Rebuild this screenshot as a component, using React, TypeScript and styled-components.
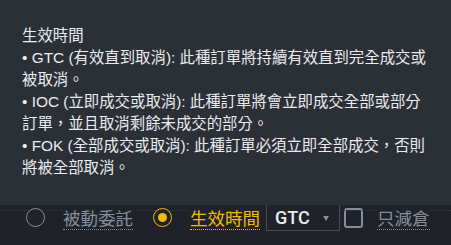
import { useState } from 'react';
import styled, { createGlobalStyle } from 'styled-components';

const GlobalStyle = createGlobalStyle`
  html, body {
    margin: 0;
    padding: 0;
    background: #1f2228;
  }
  body {
    font-family: Roboto, "Noto Sans CJK TC", sans-serif;
  }
`;

const Page = styled.div`
  position: relative;
  width: 451px;
  height: 245px;
  padding-top: 204px;
  box-sizing: border-box;
  background: #1f2228;
  overflow: hidden;
`;

const Tooltip = styled.div`
  position: absolute;
  top: 0;
  left: 0;
  right: 0;
  height: 205px;
  box-sizing: border-box;
  padding: 25px 22px 0 22px;
  background: #2b2f36;
  color: #eaecef;
  font-family: "Liberation Sans", "Noto Sans CJK TC", sans-serif;
  font-size: 15.4px;
  line-height: 22px;
  z-index: 2;
`;

const TipLine = styled.div``;

const Row = styled.div`
  position: relative;
  display: flex;
  align-items: center;
  height: 27px;
  padding-left: 26px;

  &:before {
    content: '';
    position: absolute;
    top: 6px;
    left: 0;
    right: 0;
    border-top: 1px dotted #353a42;
  }
`;

const Radio = styled.span<{ $checked: boolean }>`
  position: relative;
  width: 19px;
  height: 19px;
  box-sizing: border-box;
  border-radius: 50%;
  border: 1.5px solid ${(p) => (p.$checked ? '#f0b90b' : '#848e9c')};
  background: #1f2228;
  margin-right: 18px;
  flex-shrink: 0;

  &:after {
    content: '';
    display: ${(p) => (p.$checked ? 'block' : 'none')};
    position: absolute;
    top: 3.5px;
    left: 3.5px;
    width: 9px;
    height: 9px;
    border-radius: 50%;
    background: #f0b90b;
  }
`;

const Label = styled.span<{ $active?: boolean }>`
  position: relative;
  font-family: "Noto Sans CJK TC", sans-serif;
  font-size: 17.5px;
  line-height: 20px;
  padding-bottom: 1px;
  margin-top: 3px;
  color: ${(p) => (p.$active ? '#f0b90b' : '#848e9c')};
  border-bottom: 1px dotted ${(p) => (p.$active ? '#f0b90b' : '#848e9c')};
  margin-right: 20px;
  background: #1f2228;
  cursor: pointer;
`;

const Select = styled.div`
  position: relative;
  display: flex;
  align-items: center;
  width: 74px;
  height: 27px;
  box-sizing: border-box;
  border: 1px solid #474d57;
  padding-left: 8px;
  margin-left: -14px;
  margin-right: 4px;
  background: #1f2228;
  color: #eaecef;
  font-size: 18px;
  font-weight: 500;
`;

const Caret = styled.span`
  position: absolute;
  right: 10px;
  top: 11px;
  width: 0;
  height: 0;
  border-left: 3.5px solid transparent;
  border-right: 3.5px solid transparent;
  border-top: 5px solid #848e9c;
`;

const Checkbox = styled.span`
  width: 19px;
  height: 20px;
  box-sizing: border-box;
  border: 2px solid #848e9c;
  border-radius: 3px;
  margin-right: 14px;
  background: #1f2228;
  flex-shrink: 0;
`;

const App = () => {
  const [mode, setMode] = useState('gtc');

  return (
    <>
      <GlobalStyle />
      <Page>
        <Tooltip>
          <TipLine>生效時間</TipLine>
          <TipLine>• GTC (有效直到取消): 此種訂單將持續有效直到完全成交或被取消。</TipLine>
          <TipLine>• IOC (立即成交或取消): 此種訂單將會立即成交全部或部分訂單，並且取消剩餘未成交的部分。</TipLine>
          <TipLine>• FOK (全部成交或取消): 此種訂單必須立即全部成交，否則將被全部取消。</TipLine>
        </Tooltip>
        <Row>
          <Radio $checked={mode === 'post'} onClick={() => setMode('post')} />
          <Label onClick={() => setMode('post')}>被動委託</Label>
          <Radio $checked={mode === 'gtc'} onClick={() => setMode('gtc')} />
          <Label $active={mode === 'gtc'} onClick={() => setMode('gtc')}>
            生效時間
          </Label>
          <Select>
            GTC
            <Caret />
          </Select>
          <Checkbox />
          <Label>只減倉</Label>
        </Row>
      </Page>
    </>
  );
};

export default App;
